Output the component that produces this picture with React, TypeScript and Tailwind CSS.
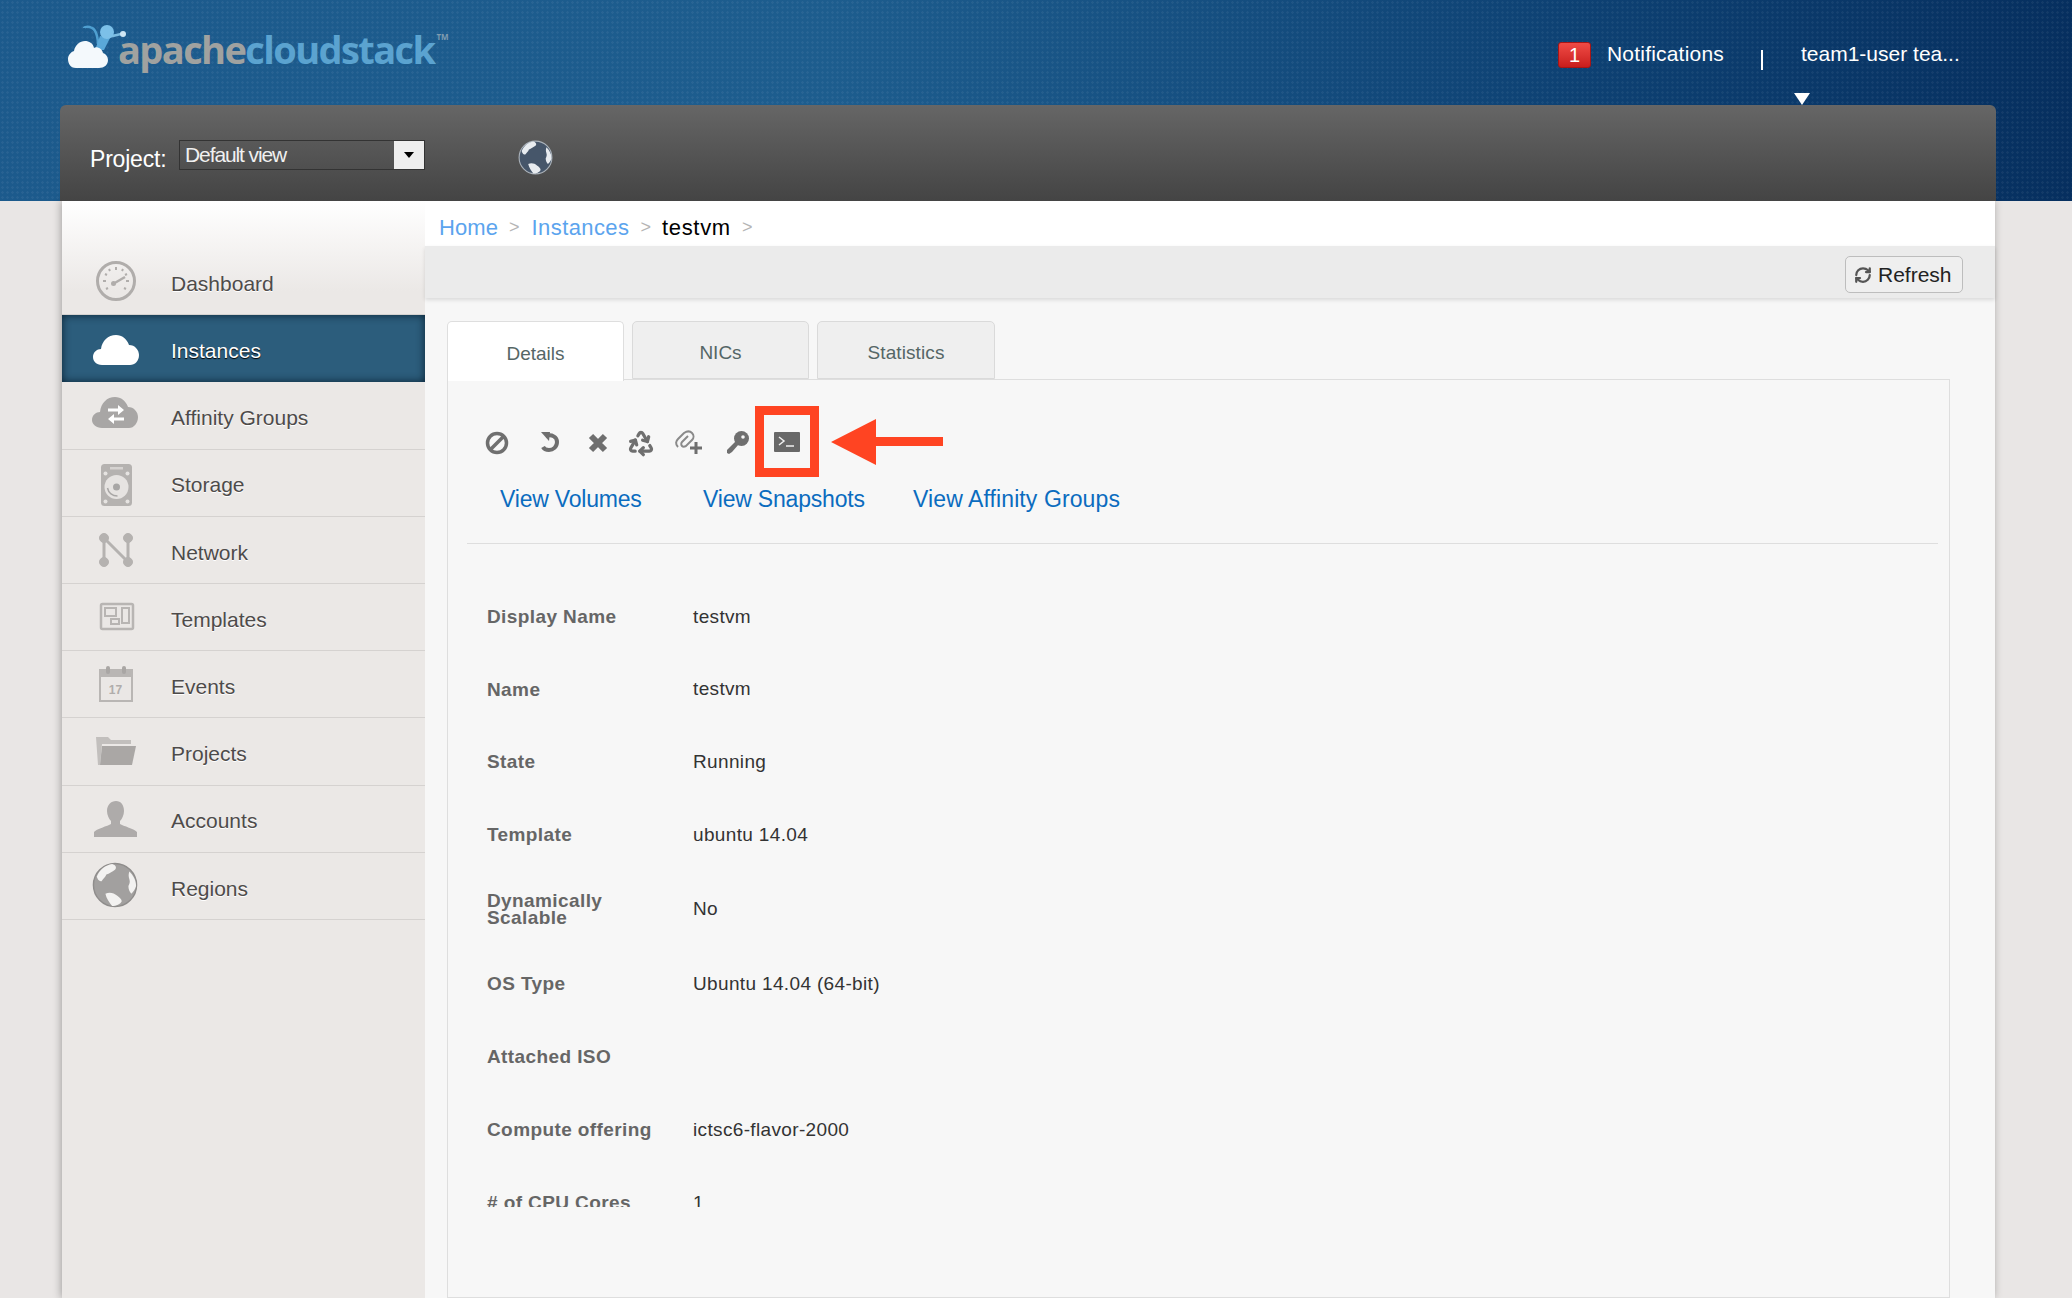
import { Recycle, RefreshCw } from "lucide-react";
import type { ReactNode } from "react";

const GREY = "#b0adab";

function Globe({ size, body, land, rim }: { size: number; body: string; land: string; rim: string }) {
  return (
    <svg width={size} height={size} viewBox="0 0 48 48">
      <circle cx="24" cy="24" r="22.500" fill={body} stroke={rim} strokeWidth="1.500" />
      <path d="M21 2c-7 1-13 6-16 13 1 4 3 5 5 5 2-3 4-4 5-7 3-1 6-3 9-5 2-2 1-5-3-6z" fill={land} />
      <path d="M39 10c4 4 7 9 7 15-1 4-3 6-5 8-2-2-3-5-3-8 1-2 2-4 1-7-1-3-1-5 0-8z" fill={land} />
      <path d="M14 33c4-2 9-1 12 2 3 2 5 4 5 6-1 3-6 5-10 5-3-4-6-8-7-13z" fill={land} />
    </svg>
  );
}

const CLOUD = "M10 40C4 40 1 36 1 32c0-5 4-8 8-8 1-8 7-14 15-14 6 0 11 4 13 10 6 0 10 5 10 10 0 6-4 10-9 10z";

const navIcons: Record<string, ReactNode> = {
  Dashboard: (
    <svg width="48" height="48" viewBox="0 0 48 48" fill="none" stroke={GREY}>
      <circle cx="24" cy="24" r="18.500" strokeWidth="3" />
      <path d="M24 10v3M31 12l-1 2M37 24h-3M17 12l1 2M11 24h3M13 17l2 1M35 17l-2 1M14 32l2-1M34 32l-2-1" strokeWidth="2" />
      <path d="M21 27l12-7" strokeWidth="2.500" />
      <circle cx="21.500" cy="26.500" r="2.500" fill={GREY} stroke="none" />
    </svg>
  ),
  Instances: (
    <svg width="48" height="48" viewBox="0 0 48 48">
      <path d={CLOUD} fill="#fff" />
    </svg>
  ),
  "Affinity Groups": (
    <svg width="48" height="48" viewBox="0 0 48 48">
      <path d="M10 37C4 37 0 33 0 29c0-5 4-8 8-8 1-9 7-15 15-15 6 0 11 4 13 10 6 0 10 5 10 10 0 6-4 11-9 11z" fill="#a8a6a5" />
      <path d="M16 17.500h10v-3.500l6 5-6 5v-3.500h-10z" fill="#fff" />
      <path d="M32 26.500h-10v-3.500l-6 5 6 5v-3.500h10z" fill="#fff" />
    </svg>
  ),
  Storage: (
    <svg width="48" height="48" viewBox="0 0 48 48">
      <rect x="9" y="5" width="31" height="42" rx="3.500" fill="#b5b2b0" />
      <circle cx="24.500" cy="28" r="12" fill="#e6e3e1" />
      <circle cx="24.500" cy="28" r="3.500" fill="#a8a6a5" />
      <path d="M15.500 29c1 5 5 8 10 8" stroke="#a8a6a5" strokeWidth="1.500" fill="none" />
      <path d="M18 8h13v2.500H18z" fill="#d6d3d1" />
      <circle cx="13.500" cy="14.500" r="2" fill="#e6e3e1" />
      <circle cx="35.500" cy="14.500" r="2" fill="#e6e3e1" />
      <circle cx="13.500" cy="42.500" r="2" fill="#e6e3e1" />
      <circle cx="35.500" cy="42.500" r="2" fill="#e6e3e1" />
    </svg>
  ),
  Network: (
    <svg width="48" height="48" viewBox="0 0 48 48" stroke="#b5b2b0" fill="#b5b2b0">
      <path d="M12 12v24M12 12l24 24M36 12v24" strokeWidth="3" />
      <circle cx="12" cy="12" r="4.500" />
      <circle cx="36" cy="12" r="4.500" />
      <circle cx="12" cy="36" r="4.500" />
      <circle cx="36" cy="36" r="4.500" />
    </svg>
  ),
  Templates: (
    <svg width="48" height="48" viewBox="0 0 48 48" fill="#eae7e5" stroke="#b8b5b3" strokeWidth="2">
      <rect x="9" y="11" width="32" height="25" rx="1.500" strokeWidth="2.500" />
      <rect x="13" y="15" width="11" height="8" />
      <rect x="30" y="15" width="7" height="15" />
      <rect x="19" y="26" width="8" height="5" />
    </svg>
  ),
  Events: (
    <svg width="48" height="48" viewBox="0 0 48 48">
      <rect x="7" y="9" width="34" height="33" fill="#b9b6b4" />
      <rect x="9" y="17" width="30" height="23" fill="#eae7e5" />
      <rect x="14" y="6" width="4" height="8" rx="2" fill="#a9a6a4" />
      <rect x="30" y="6" width="4" height="8" rx="2" fill="#a9a6a4" />
      <text x="23.500" y="34" textAnchor="middle" fontSize="12" fontWeight="700" fontFamily="Liberation Sans, sans-serif" fill="#b0adab">17</text>
    </svg>
  ),
  Projects: (
    <svg width="48" height="48" viewBox="0 0 48 48">
      <path d="M4 10h12l3 3h20v4H10l-2 21H6z" fill="#c2bfbd" />
      <path d="M10 19h34l-4 19H8z" fill="#aaa7a5" />
    </svg>
  ),
  Accounts: (
    <svg width="48" height="48" viewBox="0 0 48 48">
      <path d="M24 6c5 0 8 4 8 10 0 4-2 8-4 10v3c3 2 15 5 17 8v5H2v-5c2-3 14-6 17-8v-3c-2-2-4-6-4-10 0-6 4-10 9-10z" fill="#aeabaa" />
    </svg>
  ),
  Regions: <Globe size={46} body="#a2a09f" land="#f3f2f1" rim="#8f8d8c" />,
};

const navItems = [
  "Dashboard",
  "Instances",
  "Affinity Groups",
  "Storage",
  "Network",
  "Templates",
  "Events",
  "Projects",
  "Accounts",
  "Regions",
];

const details: [string, string, string][] = [
  ["Display Name", "testvm", "h-[72.750px]"],
  ["Name", "testvm", "h-[72.750px]"],
  ["State", "Running", "h-[72.750px]"],
  ["Template", "ubuntu 14.04", "h-[72.750px]"],
  ["Dynamically Scalable", "No", "h-[76px]"],
  ["OS Type", "Ubuntu 14.04 (64-bit)", "h-[73px]"],
  ["Attached ISO", "", "h-[73px]"],
  ["Compute offering", "ictsc6-flavor-2000", "h-[73px]"],
  ["# of CPU Cores", "1", "h-[73px]"],
];

function ActionIcons() {
  const c = "#6f6f6f";
  return (
    <div className="flex items-center h-[71px]">
      <svg className="ml-[16px] mt-[2px]" width="28" height="28" viewBox="0 0 28 28" fill="none" stroke={c} strokeWidth="3.500">
        <circle cx="14" cy="14" r="9.500" />
        <path d="M8 20L20 8" />
      </svg>
      <svg className="ml-[24px]" width="28" height="28" viewBox="0 0 28 28" fill="none" stroke={c} strokeWidth="4">
        <path d="M11 8c6-2 11 1 11 6 0 5-4 8-8 8-3 0-5-1-6-3" />
        <path d="M6 4l9 0-1 9z" fill={c} stroke="none" />
      </svg>
      <svg className="ml-[21px] mt-[2px]" width="28" height="28" viewBox="0 0 28 28" fill="none" stroke={c} strokeWidth="6">
        <path d="M7 7l14 14M21 7L7 21" />
      </svg>
      <Recycle className="ml-[15px] mt-[2px]" size={28} color={c} strokeWidth={2.800} />
      <svg className="ml-[17px]" width="32" height="28" viewBox="0 0 32 28" fill="none" stroke="#8a8a8a" strokeWidth="2">
        <path d="M6 19c-3-3-2-6 0-8l6-6c3-2 6-2 8 0 2 2 2 5 0 7l-6 6c-2 1-3 1-4 0-1-1-1-3 0-4l6-6" />
        <path d="M24 14v12M18 20h12" stroke={c} strokeWidth="3" />
      </svg>
      <svg className="ml-[19px] mt-[2px]" width="28" height="28" viewBox="0 0 28 28" fill={c}>
        <circle cx="18.500" cy="9.500" r="7.500" />
        <path d="M13 12l3 3-7 8-3 2-2-1 0-3z" />
        <circle cx="20" cy="8" r="1.800" fill="#f7f7f7" />
      </svg>
      <div className="relative ml-[4px] w-[64px] h-[71px] border-[9px] border-[#ff4422] flex items-center justify-center">
        <svg width="26" height="20" viewBox="0 0 26 20">
          <rect width="26" height="20" rx="1" fill="#686868" />
          <path d="M5 5l5 4-5 4" stroke="#f0f0f0" strokeWidth="1.500" fill="none" />
          <path d="M12 14h8" stroke="#f0f0f0" strokeWidth="1.500" />
        </svg>
      </div>
      <svg className="ml-[12px]" width="112" height="46" viewBox="0 0 112 46">
        <path d="M0 23L45 0v18h67v9H45v19z" fill="#ff4422" />
      </svg>
    </div>
  );
}

export default function App() {
  return (
    <div className="relative h-[1298px] w-[2072px] overflow-hidden bg-[#e9e6e5] font-['Liberation_Sans',sans-serif]">
      <header className="h-[201px] bg-[radial-gradient(#ffffff0d_1px,transparent_1.500px),linear-gradient(90deg,#1c5a8c,#1d5d8e_40%,#0e4274_75%,#062f5f)] bg-[length:5px_5px,100%_100%] pl-[60px] pr-[76px] flex flex-col">
        <div className="h-[105px] relative flex pr-[37px]">
          {/* logo: cloud with the mascot sitting on it */}
          <svg className="absolute left-[6px] top-[20px]" width="62" height="52" viewBox="0 0 62 52">
            <path d="M32 24c0-3-1-14-6-16-4-2-8-1-8 0" stroke="#4f9fd0" strokeWidth="2.500" fill="none" />
            <path d="M29 30l5-14 10 2-6 12z" fill="#5aa8d8" />
            <path d="M42 16c5 1 10-2 14-2" stroke="#7cbbe0" strokeWidth="2.500" fill="none" />
            <circle cx="57" cy="14" r="3" fill="#cfe6f4" />
            <circle cx="41" cy="12" r="7" fill="#7cc0e8" />
            <path d="M10 48C4 48 2 43 2 39c0-4 3-7 6-8 1-6 6-10 11-10 4 0 8 2 9 7 2-2 8 0 9 5 3 1 5 4 5 7 0 5-4 8-9 8z" fill="#f4f9fc" />
          </svg>
          <div className="ml-[58px] mt-[29px] h-[40px] text-[38px] leading-[40px] font-bold tracking-[-1.600px] font-['Open_Sans',sans-serif] flex">
            <span className="text-[#a0a2a0]">apache</span>
            <span className="text-[#5ba3d0]">cloudstack</span>
            <span className="text-[8px] leading-[16px] tracking-normal text-[#7f9bb0] ml-[2px]">TM</span>
          </div>
          <div className="ml-auto mt-[42px] flex h-[26px] items-center text-white text-[21px] leading-[24px]">
            <span className="w-[33px] h-[26px] rounded-[3px] bg-gradient-to-b from-[#f04a45] to-[#c91c1c] border border-[#a81515] text-center text-[20px] leading-[24px]">1</span>
            <span className="ml-[16px] w-[118px] whitespace-nowrap tracking-[0.2px] -mt-[2px]">Notifications</span>
            <span className="ml-[36px] w-[2px] h-[20px] mt-[10px] bg-white" />
            <span className="ml-[38px] w-[158px] whitespace-nowrap -mt-[2px]">team1-user tea...</span>
          </div>
          <span className="absolute left-[1734px] top-[93px] w-0 h-0 border-l-[8px] border-r-[8px] border-t-[12px] border-l-transparent border-r-transparent border-t-white" />
        </div>
        <div className="h-[96px] rounded-t-[6px] bg-gradient-to-b from-[#666666] to-[#444444] flex items-start">
          <span className="ml-[30px] mt-[39px] text-[23px] leading-[30px] text-white w-[89px] whitespace-nowrap tracking-[-0.2px]">Project:</span>
          <div className="mt-[35px] w-[246px] h-[30px] border border-[#333] flex justify-between">
            <span className="ml-[5px] text-[21px] leading-[27px] text-[#f0f0f0] tracking-[-1.100px]">Default view</span>
            <span className="w-[30px] h-[28px] bg-[#eeeeee] flex items-center justify-center">
              <span className="w-0 h-0 border-l-[5px] border-r-[5px] border-t-[6px] border-l-transparent border-r-transparent border-t-black" />
            </span>
          </div>
          <div className="ml-[93px] mt-[35px]">
            <Globe size={35} body="#46566a" land="#e8ecf0" rim="#aab2ba" />
          </div>
        </div>
      </header>

      <div className="ml-[62px] w-[1933px] h-[1097px] flex shadow-[-1px_0_8px_rgba(0,0,0,0.3)]">
        <aside className="w-[363px] shrink-0 pt-[47px] bg-[linear-gradient(#ffffff,#ebe8e6_90px)]">
          {navItems.map((name) => {
            const active = name === "Instances";
            return (
              <div
                key={name}
                className={
                  active
                    ? "h-[67.200px] flex items-center pl-[30px] bg-[#2c5d7c] shadow-[inset_0_0_8px_#0a2233]"
                    : "h-[67.200px] flex items-center pl-[30px] border-b border-[#d5d2d0]"
                }
              >
                <span className="w-[48px] h-[48px] shrink-0">{navIcons[name]}</span>
                <span
                  className={
                    active
                      ? "ml-[31px] pt-[4px] text-[21px] text-white [text-shadow:0_1px_1px_#000]"
                      : "ml-[31px] pt-[5px] text-[21px] text-[#4e4b4a] [text-shadow:0_1px_0_#fff]"
                  }
                >
                  {name}
                </span>
              </div>
            );
          })}
        </aside>

        <main className="flex-1 flex flex-col bg-[#f7f7f7]">
          <nav className="h-[45px] bg-white flex items-center pl-[14px] pt-[7px] text-[22px]">
            <span className="text-[#5ba4ee] tracking-[0.1px]">Home</span>
            <span className="ml-[11px] text-[#b5b5b5] text-[18px]">&gt;</span>
            <span className="ml-[12px] text-[#5ba4ee] tracking-[0.4px]">Instances</span>
            <span className="ml-[11px] text-[#b5b5b5] text-[18px]">&gt;</span>
            <span className="ml-[11px] text-black tracking-[0.7px]">testvm</span>
            <span className="ml-[11px] text-[#b5b5b5] text-[18px]">&gt;</span>
          </nav>
          <div className="h-[52px] bg-[#ebebeb] shadow-[0_2px_4px_rgba(0,0,0,0.12)] flex items-start justify-end pr-[32px] pt-[10px]">
            <button className="w-[118px] h-[37px] rounded-[5px] border border-[#bdbdbd] bg-[#efefef] flex items-center pl-[8px] gap-[6px] text-[21px] text-[#222]">
              <RefreshCw size={18} strokeWidth={3} className="text-[#555]" />
              Refresh
            </button>
          </div>

          <div className="flex-1 pt-[23px] pl-[22px] pr-[45px] flex flex-col">
            <div className="flex h-[60px] gap-[8px] text-[19px] text-[#566]">
              <div className="w-[177px] h-[60px] pt-[5px] rounded-t-[5px] border border-b-0 border-[#dedede] bg-white flex items-center justify-center relative z-10">
                Details
              </div>
              <div className="w-[177px] h-[58px] pt-[7px] rounded-t-[5px] border border-[#dadada] bg-[#efefef] flex items-center justify-center">
                NICs
              </div>
              <div className="w-[178px] h-[58px] pt-[7px] rounded-t-[5px] border border-[#dadada] bg-[#efefef] flex items-center justify-center tracking-[0.1px]">
                Statistics
              </div>
            </div>
            <section className="flex-1 -mt-[2px] border border-[#dedede] bg-[#f7f7f7] pl-[19px] pr-[11px]">
              <div className="pt-[26px] border-b border-[#dedede] h-[164px]">
                <ActionIcons />
                <div className="flex text-[23px] text-[#0b6cbf] mt-[6px] leading-[32px]">
                  <span className="ml-[33px] w-[203px] tracking-[-0.2px]">View Volumes</span>
                  <span className="w-[210px] tracking-[-0.2px]">View Snapshots</span>
                  <span className="tracking-[0.1px]">View Affinity Groups</span>
                </div>
              </div>
              <div className="mt-[36px] h-[627px] overflow-hidden pl-[20px]">
                {details.map(([label, value, height]) => (
                  <div key={label} className={`${height} flex items-center`}>
                    <span className="w-[206px] shrink-0 pr-[20px] text-[19px] leading-[17px] tracking-[0.4px] font-bold text-[#666]">{label}</span>
                    <span className="pt-[1px] text-[19px] tracking-[0.35px] text-[#333]">{value}</span>
                  </div>
                ))}
              </div>
            </section>
          </div>
        </main>
      </div>
    </div>
  );
}
